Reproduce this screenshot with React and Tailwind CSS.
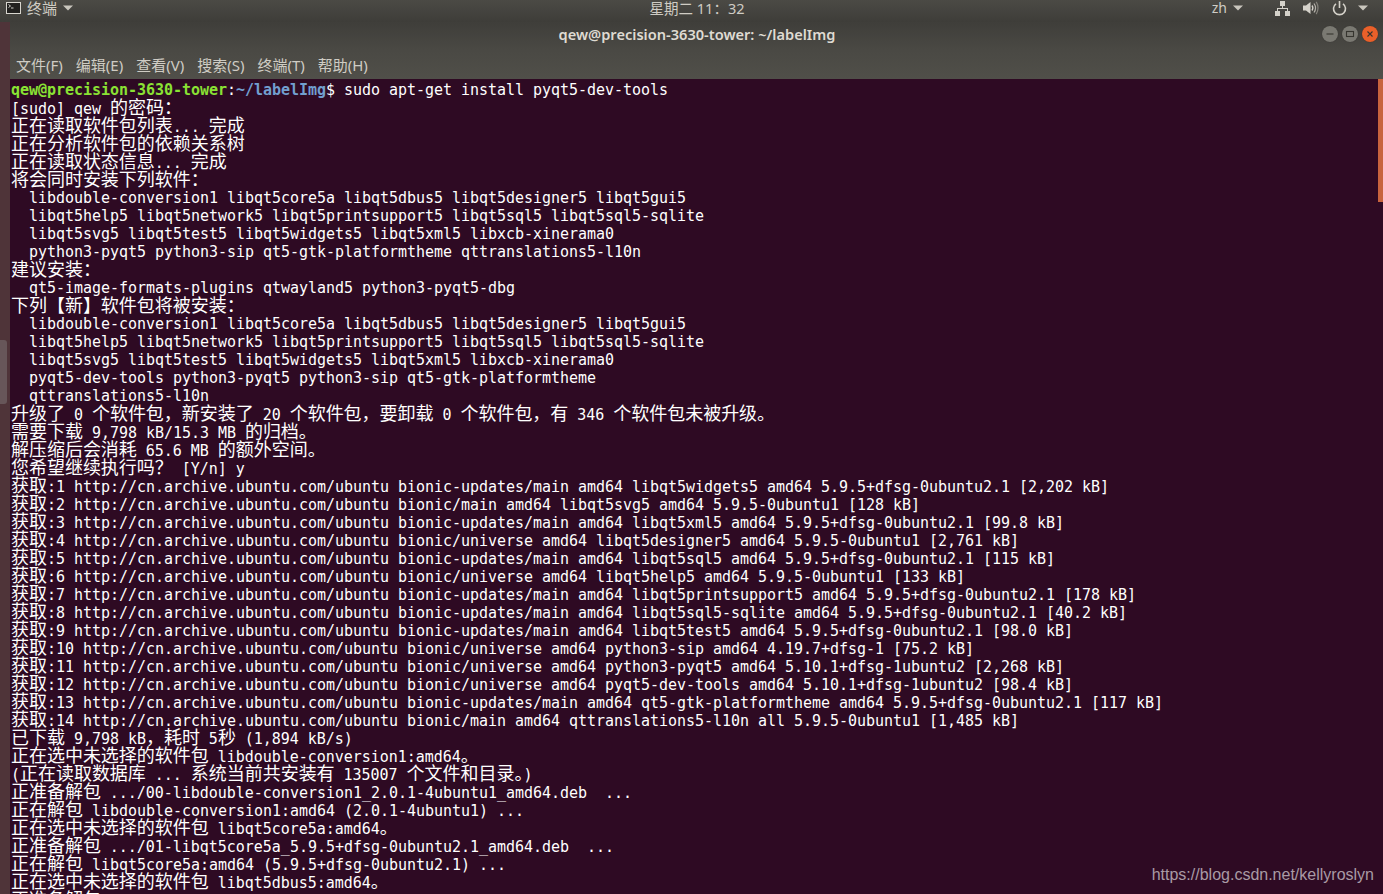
import React from 'react';

const CJK_SPLIT = /([\u2e80-\uffef]+)/;

const output = [
  '[sudo] qew 的密码：',
  '正在读取软件包列表... 完成',
  '正在分析软件包的依赖关系树',
  '正在读取状态信息... 完成',
  '将会同时安装下列软件：',
  '  libdouble-conversion1 libqt5core5a libqt5dbus5 libqt5designer5 libqt5gui5',
  '  libqt5help5 libqt5network5 libqt5printsupport5 libqt5sql5 libqt5sql5-sqlite',
  '  libqt5svg5 libqt5test5 libqt5widgets5 libqt5xml5 libxcb-xinerama0',
  '  python3-pyqt5 python3-sip qt5-gtk-platformtheme qttranslations5-l10n',
  '建议安装：',
  '  qt5-image-formats-plugins qtwayland5 python3-pyqt5-dbg',
  '下列【新】软件包将被安装：',
  '  libdouble-conversion1 libqt5core5a libqt5dbus5 libqt5designer5 libqt5gui5',
  '  libqt5help5 libqt5network5 libqt5printsupport5 libqt5sql5 libqt5sql5-sqlite',
  '  libqt5svg5 libqt5test5 libqt5widgets5 libqt5xml5 libxcb-xinerama0',
  '  pyqt5-dev-tools python3-pyqt5 python3-sip qt5-gtk-platformtheme',
  '  qttranslations5-l10n',
  '升级了 0 个软件包，新安装了 20 个软件包，要卸载 0 个软件包，有 346 个软件包未被升级。',
  '需要下载 9,798 kB/15.3 MB 的归档。',
  '解压缩后会消耗 65.6 MB 的额外空间。',
  '您希望继续执行吗？ [Y/n] y',
  '获取:1 http://cn.archive.ubuntu.com/ubuntu bionic-updates/main amd64 libqt5widgets5 amd64 5.9.5+dfsg-0ubuntu2.1 [2,202 kB]',
  '获取:2 http://cn.archive.ubuntu.com/ubuntu bionic/main amd64 libqt5svg5 amd64 5.9.5-0ubuntu1 [128 kB]',
  '获取:3 http://cn.archive.ubuntu.com/ubuntu bionic-updates/main amd64 libqt5xml5 amd64 5.9.5+dfsg-0ubuntu2.1 [99.8 kB]',
  '获取:4 http://cn.archive.ubuntu.com/ubuntu bionic/universe amd64 libqt5designer5 amd64 5.9.5-0ubuntu1 [2,761 kB]',
  '获取:5 http://cn.archive.ubuntu.com/ubuntu bionic-updates/main amd64 libqt5sql5 amd64 5.9.5+dfsg-0ubuntu2.1 [115 kB]',
  '获取:6 http://cn.archive.ubuntu.com/ubuntu bionic/universe amd64 libqt5help5 amd64 5.9.5-0ubuntu1 [133 kB]',
  '获取:7 http://cn.archive.ubuntu.com/ubuntu bionic-updates/main amd64 libqt5printsupport5 amd64 5.9.5+dfsg-0ubuntu2.1 [178 kB]',
  '获取:8 http://cn.archive.ubuntu.com/ubuntu bionic-updates/main amd64 libqt5sql5-sqlite amd64 5.9.5+dfsg-0ubuntu2.1 [40.2 kB]',
  '获取:9 http://cn.archive.ubuntu.com/ubuntu bionic-updates/main amd64 libqt5test5 amd64 5.9.5+dfsg-0ubuntu2.1 [98.0 kB]',
  '获取:10 http://cn.archive.ubuntu.com/ubuntu bionic/universe amd64 python3-sip amd64 4.19.7+dfsg-1 [75.2 kB]',
  '获取:11 http://cn.archive.ubuntu.com/ubuntu bionic/universe amd64 python3-pyqt5 amd64 5.10.1+dfsg-1ubuntu2 [2,268 kB]',
  '获取:12 http://cn.archive.ubuntu.com/ubuntu bionic/universe amd64 pyqt5-dev-tools amd64 5.10.1+dfsg-1ubuntu2 [98.4 kB]',
  '获取:13 http://cn.archive.ubuntu.com/ubuntu bionic-updates/main amd64 qt5-gtk-platformtheme amd64 5.9.5+dfsg-0ubuntu2.1 [117 kB]',
  '获取:14 http://cn.archive.ubuntu.com/ubuntu bionic/main amd64 qttranslations5-l10n all 5.9.5-0ubuntu1 [1,485 kB]',
  '已下载 9,798 kB，耗时 5秒 (1,894 kB/s)',
  '正在选中未选择的软件包 libdouble-conversion1:amd64。',
  '(正在读取数据库 ... 系统当前共安装有 135007 个文件和目录。)',
  '正准备解包 .../00-libdouble-conversion1_2.0.1-4ubuntu1_amd64.deb  ...',
  '正在解包 libdouble-conversion1:amd64 (2.0.1-4ubuntu1) ...',
  '正在选中未选择的软件包 libqt5core5a:amd64。',
  '正准备解包 .../01-libqt5core5a_5.9.5+dfsg-0ubuntu2.1_amd64.deb  ...',
  '正在解包 libqt5core5a:amd64 (5.9.5+dfsg-0ubuntu2.1) ...',
  '正在选中未选择的软件包 libqt5dbus5:amd64。',
  '正准备解包 .../02-libqt5dbus5_5.9.5+dfsg-0ubuntu2.1_amd64.deb  ...',
];

const menus = ['文件(F)', '编辑(E)', '查看(V)', '搜索(S)', '终端(T)', '帮助(H)'];

const Caret = ({ className }) => (
  <svg width="10" height="6" viewBox="0 0 10 6" className={className}>
    <path d="M0 0.5h10L5 5.5z" fill="#c9c6bd" />
  </svg>
);

const TerminalIcon = () => (
  <svg width="15" height="12" viewBox="0 0 15 12">
    <rect x="0.5" y="0.5" width="14" height="11" fill="#22211f" stroke="#d8d6cf" />
    <path d="M2.5 2.5l2 1.5-2 1.5M5 6h2.5" fill="none" stroke="#e8e6df" strokeWidth="0.9" />
  </svg>
);

const NetworkIcon = () => (
  <svg width="15" height="15" viewBox="0 0 15 15" fill="#d5d2ca">
    <rect x="5" y="0" width="5" height="5" />
    <rect x="0" y="10" width="5" height="5" />
    <rect x="10" y="10" width="5" height="5" />
    <path d="M7 5h1v2h5v3h-1V8H3v2H2V7h5z" />
  </svg>
);

const SpeakerIcon = () => (
  <svg width="16" height="14" viewBox="0 0 16 14" fill="none">
    <path d="M0 4.5h3L7.5 1v12L3 9.5H0z" fill="#d5d2ca" />
    <path d="M9 4.5c1 1.4 1 3.6 0 5" stroke="#d5d2ca" strokeWidth="1.3" />
    <path d="M11 2.5c1.8 2.6 1.8 6.4 0 9" stroke="#b5b2aa" strokeWidth="1.2" />
    <path d="M13.2 0.8c2.4 3.6 2.4 8.8 0 12.4" stroke="#85837c" strokeWidth="1.2" />
  </svg>
);

const PowerIcon = () => (
  <svg width="15" height="15" viewBox="0 0 15 15" fill="none" stroke="#d5d2ca" strokeWidth="1.6">
    <path d="M4 2.8a6 6 0 1 0 7 0" />
    <path d="M7.5 0v7" />
  </svg>
);

const WindowButton = ({ children, className }) => (
  <div className={`flex h-[16px] w-[16px] items-center justify-center rounded-full shadow-[0_0_1px_#2b2a27] ${className}`}>
    <svg width="10" height="10" viewBox="0 0 10 10" fill="none" stroke="#36352f" strokeWidth="1.1">
      {children}
    </svg>
  </div>
);

const TopBar = () => (
  <header className="flex h-[22px] items-center bg-gradient-to-b from-[#4b4a45] to-[#3e3d39] text-[15px] leading-[18px] text-[#cfccc4] [font-family:'Noto_Sans','Noto_Sans_CJK_SC',sans-serif]">
    <div className="flex flex-1 items-center pb-[6px] pl-[6px]">
      <TerminalIcon />
      <span className="ml-[6px]">终端</span>
      <Caret className="ml-[6px]" />
    </div>
    <div className="pb-[6px] pl-[20px] text-[14.5px]">星期二 11：32</div>
    <div className="flex flex-1 items-center justify-end pb-[6px] pr-[15px]">
      <span className="text-[14px]">zh</span>
      <Caret className="ml-[6px]" />
      <div className="ml-[32px]"><NetworkIcon /></div>
      <div className="ml-[13px]"><SpeakerIcon /></div>
      <div className="ml-[13px]"><PowerIcon /></div>
      <Caret className="ml-[11px]" />
    </div>
  </header>
);

const TitleBar = () => (
  <div className="relative flex h-[25px] items-center justify-center text-[14.6px] font-semibold text-[#dfdbd2] [font-family:'Noto_Sans',sans-serif]">
    <span className="pl-[1px]">qew@precision-3630-tower: ~/labelImg</span>
    <div className="absolute right-[5px] top-[4px] flex gap-[4px]">
      <WindowButton className="bg-[#7a7972]"><path d="M1.5 5h7" /></WindowButton>
      <WindowButton className="bg-[#7a7972]"><rect x="1.5" y="2.5" width="7" height="5" /></WindowButton>
      <WindowButton className="bg-[#e9602a]"><path d="M2.5 2.5l5 5M7.5 2.5l-5 5" /></WindowButton>
    </div>
  </div>
);

const MenuBar = () => (
  <nav className="flex h-[32px] items-start gap-[13px] pl-[6px] pt-[9px] text-[15px] leading-[18px] text-[#cfccc4] [font-family:'Noto_Sans','Noto_Sans_CJK_SC',sans-serif]">
    {menus.map((m) => <span key={m}>{m}</span>)}
  </nav>
);

// CJK glyphs take two cells (18px), everything else one cell (9px)
const Line = ({ text }) => {
  const parts = text.split(CJK_SPLIT);
  return (
    <div className={parts.length > 1 ? 'h-[18px] whitespace-pre pt-[1px]' : 'h-[18px] whitespace-pre'}>
      {parts.map((part, i) => (
        i % 2 === 1
          ? <span key={i} className="text-[18px] leading-[0] [font-family:'Noto_Sans_CJK_SC',sans-serif]">{part}</span>
          : <span key={i}>{part}</span>
      ))}
    </div>
  );
};

const Prompt = () => (
  <div className="h-[18px] whitespace-pre">
    <span className="font-bold text-[#8ae234]">qew@precision-3630-tower</span>
    <span>:</span>
    <span className="font-bold text-[#729fcf]">~/labelImg</span>
    <span>$ sudo apt-get install pyqt5-dev-tools</span>
  </div>
);

const App = () => (
  <div className="relative flex h-[894px] w-[1383px] flex-col overflow-hidden bg-[#2e0a23]">
    <TopBar />
    <div className="flex min-h-0 flex-1">
      <aside className="w-[10px] shrink-0 bg-[#4f3439] pt-[318px]">
        <div className="h-[64px] w-[7px] rounded-r-[3px] bg-[#675659]" />
      </aside>
      <div className="flex min-w-0 flex-1 flex-col">
        <div className="bg-gradient-to-b from-[#3f3e3a] via-[#4a4944] to-[#504f49]">
          <TitleBar />
          <MenuBar />
        </div>
        <main className="relative min-h-0 flex-1 overflow-hidden pl-[1px] pt-[2px] text-[15px] leading-[18px] tracking-[-0.03px] text-white [font-family:'DejaVu_Sans_Mono',monospace]">
          <Prompt />
          {output.map((line, i) => <Line key={i} text={line} />)}
          <div className="absolute right-0 top-0 h-[123px] w-[5px] bg-[#c8643e]" />
        </main>
      </div>
    </div>
    <div className="absolute bottom-[9px] right-[9px] text-[16px] leading-[20px] text-[#a99aa5] [font-family:'Liberation_Sans',sans-serif]">
      https://blog.csdn.net/kellyroslyn
    </div>
  </div>
);

export default App;
